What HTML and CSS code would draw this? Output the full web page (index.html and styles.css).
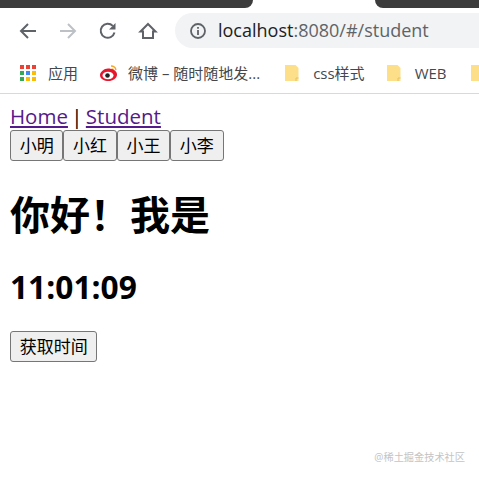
FILE: index.html
```html
<!DOCTYPE html>
<html>
<head>
    <meta charset="UTF-8">
    <title>Student</title>
    <link rel="stylesheet" href="styles.css">
</head>
<body>
    <div class="browser">
        <div class="tabs">
            <div class="tab tab-left"></div>
            <div class="tab tab-right"></div>
        </div>
        <div class="toolbar">
            <svg class="nav-icon" width="20" height="20" viewBox="0 0 20 20"><path d="M18 10H3M10 3l-7 7 7 7" fill="none" stroke="#5f6368" stroke-width="2"/></svg>
            <svg class="nav-icon" width="20" height="20" viewBox="0 0 20 20"><path d="M2 10h15M10 3l7 7-7 7" fill="none" stroke="#bdc1c6" stroke-width="2"/></svg>
            <svg class="nav-icon" width="20" height="20" viewBox="0 0 20 20"><path d="M16.500 11.500A7 7 0 1 1 14.800 4.900" fill="none" stroke="#5f6368" stroke-width="2"/><path d="M17.500 2v6.500h-6.500z" fill="#5f6368"/></svg>
            <svg class="nav-icon" width="20" height="20" viewBox="0 0 20 20"><path d="M10 3l7.500 7.500H15V17H5v-6.500H2.500z" fill="none" stroke="#5f6368" stroke-width="2"/></svg>
            <div class="address">
                <svg width="18" height="18" viewBox="0 0 18 18"><circle cx="9" cy="9" r="7" fill="none" stroke="#5f6368" stroke-width="1.800"/><path d="M9 8v5M9 5v1.800" stroke="#5f6368" stroke-width="1.800"/></svg>
                <span class="url"><span class="host">localhost</span>:8080/#/student</span>
            </div>
        </div>
        <div class="bookmarks">
            <div class="bookmark bm-apps">
                <svg width="18" height="18" viewBox="0 0 18 18">
                    <rect x="1" y="1" width="4" height="4" fill="#ea4335"/><rect x="7" y="1" width="4" height="4" fill="#ea4335"/><rect x="13" y="1" width="4" height="4" fill="#ea4335"/>
                    <rect x="1" y="7" width="4" height="4" fill="#34a853"/><rect x="7" y="7" width="4" height="4" fill="#4285f4"/><rect x="13" y="7" width="4" height="4" fill="#fbbc05"/>
                    <rect x="1" y="13" width="4" height="4" fill="#34a853"/><rect x="7" y="13" width="4" height="4" fill="#fbbc05"/><rect x="13" y="13" width="4" height="4" fill="#fbbc05"/>
                </svg>
                <span>应用</span>
            </div>
            <div class="bookmark bm-weibo">
                <svg width="20" height="18" viewBox="0 0 20 18">
                    <path d="M12 2c2.500 0 4.500 1.500 5 4M12.500 5c1.200 0 2 .7 2.300 1.800" fill="none" stroke="#f5a623" stroke-width="1.300"/>
                    <path d="M1 11c0-3 4-6.500 8-6.500s9 2 9 6-4.500 6.500-8.500 6.500S1 15 1 11z" fill="#e6162d"/>
                    <ellipse cx="9" cy="11.500" rx="5.500" ry="3.800" fill="#fff"/>
                    <circle cx="8.500" cy="11.500" r="2.300" fill="#222"/>
                </svg>
                <span>微博 – 随时随地发...</span>
            </div>
            <div class="bookmark bm-css">
                <svg class="folder" width="15" height="18" viewBox="0 0 15 18"><path d="M1 1h10.500l3 3v13H1z" fill="#fddf8a"/><path d="M12 17v-3h2.500" fill="none" stroke="#e6c35c"/></svg>
                <span>css样式</span>
            </div>
            <div class="bookmark bm-web">
                <svg class="folder" width="15" height="18" viewBox="0 0 15 18"><path d="M1 1h10.500l3 3v13H1z" fill="#fddf8a"/><path d="M12 17v-3h2.500" fill="none" stroke="#e6c35c"/></svg>
                <span>WEB</span>
            </div>
            <div class="bookmark">
                <svg class="folder" width="15" height="18" viewBox="0 0 15 18"><path d="M1 1h10.500l3 3v13H1z" fill="#fddf8a"/><path d="M12 17v-3h2.500" fill="none" stroke="#e6c35c"/></svg>
            </div>
        </div>
    </div>
    <div class="page">
        <div class="nav"><a href="#">Home</a> | <a href="#">Student</a></div>
        <div class="names">
            <button>小明</button><button>小红</button><button>小王</button><button>小李</button>
        </div>
        <h1>你好！我是</h1>
        <h2>11:01:09</h2>
        <button>获取时间</button>
    </div>
    <div class="watermark">@稀土掘金技术社区</div>
</body>
</html>
```

FILE: styles.css
```css
html {
    height: 100%;
}
body {
    margin: 0;
    height: 477px;
    overflow: hidden;
    position: relative;
    background-color: #fff;
    color: #000;
    font-family: "Open Sans", "Noto Sans CJK SC", sans-serif;
}
.browser {
    height: 94px;
    border-bottom: 1px solid #d8d9da;
    box-sizing: border-box;
}
.tabs {
    display: flex;
    justify-content: space-between;
    height: 8px;
}
.tab {
    background-color: #3c3c3c;
}
.tab-left {
    width: 253px;
    border-bottom-right-radius: 8px;
}
.tab-right {
    width: 104px;
    border-bottom-left-radius: 8px;
}
.toolbar {
    display: flex;
    align-items: center;
    height: 35px;
    margin-top: 5px;
    padding-left: 18px;
}
.nav-icon {
    margin-right: 20px;
    flex-shrink: 0;
}
.address {
    display: flex;
    align-items: center;
    gap: 11px;
    flex: 1;
    height: 35px;
    margin-left: -3px;
    padding-left: 14px;
    background-color: #f1f3f4;
    border-radius: 18px 0 0 18px;
}
.url {
    font-size: 18px;
    line-height: 34px;
    margin-top: -2px;
    color: #5f6368;
    white-space: nowrap;
}
.host {
    color: #202124;
}
.bookmarks {
    display: flex;
    align-items: center;
    height: 35px;
    margin-top: 7px;
    padding-left: 19px;
    font-size: 15px;
    color: #44484d;
    white-space: nowrap;
}
.bookmark {
    display: flex;
    align-items: center;
    flex-shrink: 0;
}
.bm-apps {
    gap: 11px;
    margin-right: 21px;
}
.bm-weibo {
    gap: 9px;
    margin-right: 24px;
}
.bm-css {
    gap: 14px;
    margin-right: 21px;
}
.bm-web {
    gap: 14px;
    margin-right: 23px;
}
.page {
    padding: 10px 10px 0;
    font-size: 20.500px;
}
.nav {
    line-height: 24px;
    padding-bottom: 2px;
    word-spacing: -2px;
}
.nav a {
    color: #551a8b;
}
.names {
    display: flex;
}
button {
    font-family: inherit;
    font-size: 17px;
    line-height: 21px;
    height: 31px;
    padding: 0 8.700px;
    background-color: #efefef;
    color: #000;
    border: 1px solid #767676;
    border-radius: 3px;
}
h1 {
    font-size: 40px;
    line-height: 54px;
    margin: 27px 0 0;
}
h2 {
    font-size: 31.700px;
    line-height: 40px;
    margin: 25px 0 0;
}
h2 + button {
    margin-top: 24px;
}
.watermark {
    position: absolute;
    right: 14px;
    bottom: 13px;
    font-size: 10.200px;
    color: #c4c4c4;
}
```
